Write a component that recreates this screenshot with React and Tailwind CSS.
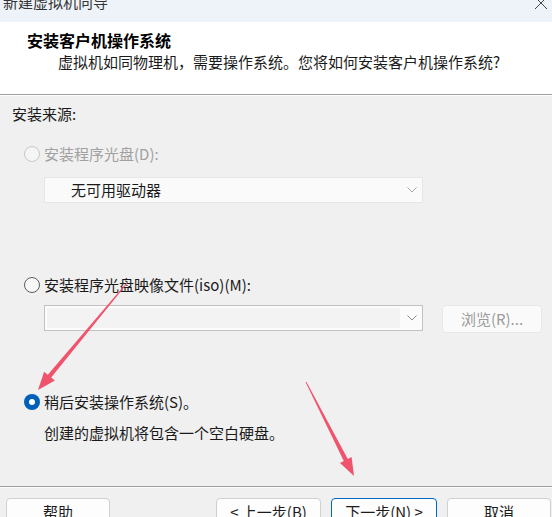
function arrowPoints(x1, y1, x2, y2, headLen, headW, w0, w1) {
  const dx = x2 - x1
  const dy = y2 - y1
  const len = Math.hypot(dx, dy)
  const ux = dx / len
  const uy = dy / len
  const px = -uy
  const py = ux
  const bx = x2 - ux * headLen
  const by = y2 - uy * headLen
  const pts = [
    [x1 + (px * w0) / 2, y1 + (py * w0) / 2],
    [bx + (px * w1) / 2, by + (py * w1) / 2],
    [bx + (px * headW) / 2, by + (py * headW) / 2],
    [x2, y2],
    [bx - (px * headW) / 2, by - (py * headW) / 2],
    [bx - (px * w1) / 2, by - (py * w1) / 2],
    [x1 - (px * w0) / 2, y1 - (py * w0) / 2],
  ]
  return pts.map(p => p[0].toFixed(1) + ',' + p[1].toFixed(1)).join(' ')
}

function Radio({ state }) {
  if (state === 'checked') {
    return (
      <div className="w-4 h-4 rounded-full bg-[#005fb8] flex items-center justify-center flex-shrink-0">
        <div className="w-[6px] h-[6px] rounded-full bg-white" />
      </div>
    )
  }
  if (state === 'disabled') {
    return (
      <div className="w-4 h-4 rounded-full border border-[#c8c8c8] bg-[#f5f5f5] flex-shrink-0" />
    )
  }
  return (
    <div className="w-4 h-4 rounded-full border border-[#5d5d5d] bg-[#f7f7f7] flex-shrink-0" />
  )
}

function Chevron({ color }) {
  return (
    <svg width="10" height="6" viewBox="0 0 10 6" fill="none">
      <path d="M0.5 0.5L5 5L9.5 0.5" stroke={color} strokeWidth="1" />
    </svg>
  )
}

function Button({ children, primary, className }) {
  return (
    <div
      className={
        'h-[27px] rounded-[4px] bg-[#fdfdfd] flex items-center justify-center text-[15px] text-[#1b1b1b] leading-none ' +
        (primary ? 'border border-[#0067c0] ' : 'border border-[#d0d0d0] ') +
        className
      }
    >
      {children}
    </div>
  )
}

export default function App() {
  return (
    <div className="relative w-[552px] h-[517px] overflow-hidden bg-[#f0f0f0] font-['Noto_Sans_CJK_SC',sans-serif] text-[#1a1a1a]">
      {/* Title bar */}
      <div className="h-[22px] bg-[#eef3f9] flex justify-between items-start overflow-hidden">
        <div className="pl-[3px] mt-[-8px] text-[15px] leading-[20px] text-[#333]">
          新建虚拟机向导
        </div>
        <svg width="14" height="14" viewBox="0 0 14 14" className="mr-[4px] mt-[-4px]" fill="none">
          <path d="M1 1L13 13M13 1L1 13" stroke="#444" strokeWidth="1" />
        </svg>
      </div>

      {/* Header */}
      <div className="h-[72px] bg-white pt-[7px]">
        <div className="pl-[27px] text-[16px] font-bold leading-[22px] text-black">
          安装客户机操作系统
        </div>
        <div className="pl-[58px] text-[15px] leading-[22px] text-[#1a1a1a]">
          虚拟机如同物理机，需要操作系统。您将如何安装客户机操作系统?
        </div>
      </div>
      <div className="border-t border-[#a0a0a0]" />
      <div className="border-t border-[#fcfcfc]" />

      {/* Body */}
      <div className="pt-[7px] text-[15px] leading-[22px]">
        <div className="pl-[12px]">安装来源:</div>

        <div className="mt-[18px] pl-[24px] flex items-center gap-[4px] text-[#a0a0a0]">
          <Radio state="disabled" />
          <span>安装程序光盘(D):</span>
        </div>

        <div className="mt-[12px] ml-[44px] w-[379px] h-[26px] bg-[#fafafa] border border-[#e6e6e6] flex items-center justify-between pl-[26px] pr-[5px]">
          <span>无可用驱动器</span>
          <Chevron color="#a8a8a8" />
        </div>

        <div className="mt-[71px] pl-[24px] flex items-center gap-[4px]">
          <Radio state="unchecked" />
          <span>安装程序光盘映像文件(iso)(M):</span>
        </div>

        <div className="mt-[9px] ml-[44px] flex items-start gap-[19px]">
          <div className="w-[379px] h-[26px] bg-[#fbfbfb] border border-[#c2c2c2] flex items-center justify-between pl-[2px] pr-[5px]">
            <div className="w-[353px] h-[20px] bg-[#f3f3f3]" />
            <Chevron color="#8c8c8c" />
          </div>
          <div className="w-[100px] h-[28px] rounded-[4px] bg-[#fafafa] border border-[#e8e8e8] flex items-center justify-center text-[#9a9a9a]">
            浏览(R)...
          </div>
        </div>

        <div className="mt-[58px] pl-[24px] flex items-center gap-[4px]">
          <Radio state="checked" />
          <span>稍后安装操作系统(S)。</span>
        </div>

        <div className="mt-[9px] pl-[44px]">创建的虚拟机将包含一个空白硬盘。</div>
      </div>

      {/* Footer */}
      <div className="mt-[42px] border-t border-[#a0a0a0]" />
      <div className="border-t border-[#fcfcfc]" />
      <div className="mt-[10px] flex items-start">
        <Button className="ml-[6px] w-[104px]">帮助</Button>
        <Button className="ml-[106px] w-[105px]">&lt; 上一步(B)</Button>
        <Button primary className="ml-[10px] w-[106px]">下一步(N) &gt;</Button>
        <Button className="ml-[10px] w-[104px]">取消</Button>
      </div>

      {/* Annotation arrows */}
      <svg className="absolute inset-0 pointer-events-none" width="552" height="517" viewBox="0 0 552 517">
        <polygon points={arrowPoints(127, 283, 38, 390, 18, 14, 1, 4.5)} fill="#f0546c" />
        <polygon points={arrowPoints(306, 382, 354, 476, 18, 13, 1, 4.5)} fill="#f0546c" />
      </svg>
    </div>
  )
}
